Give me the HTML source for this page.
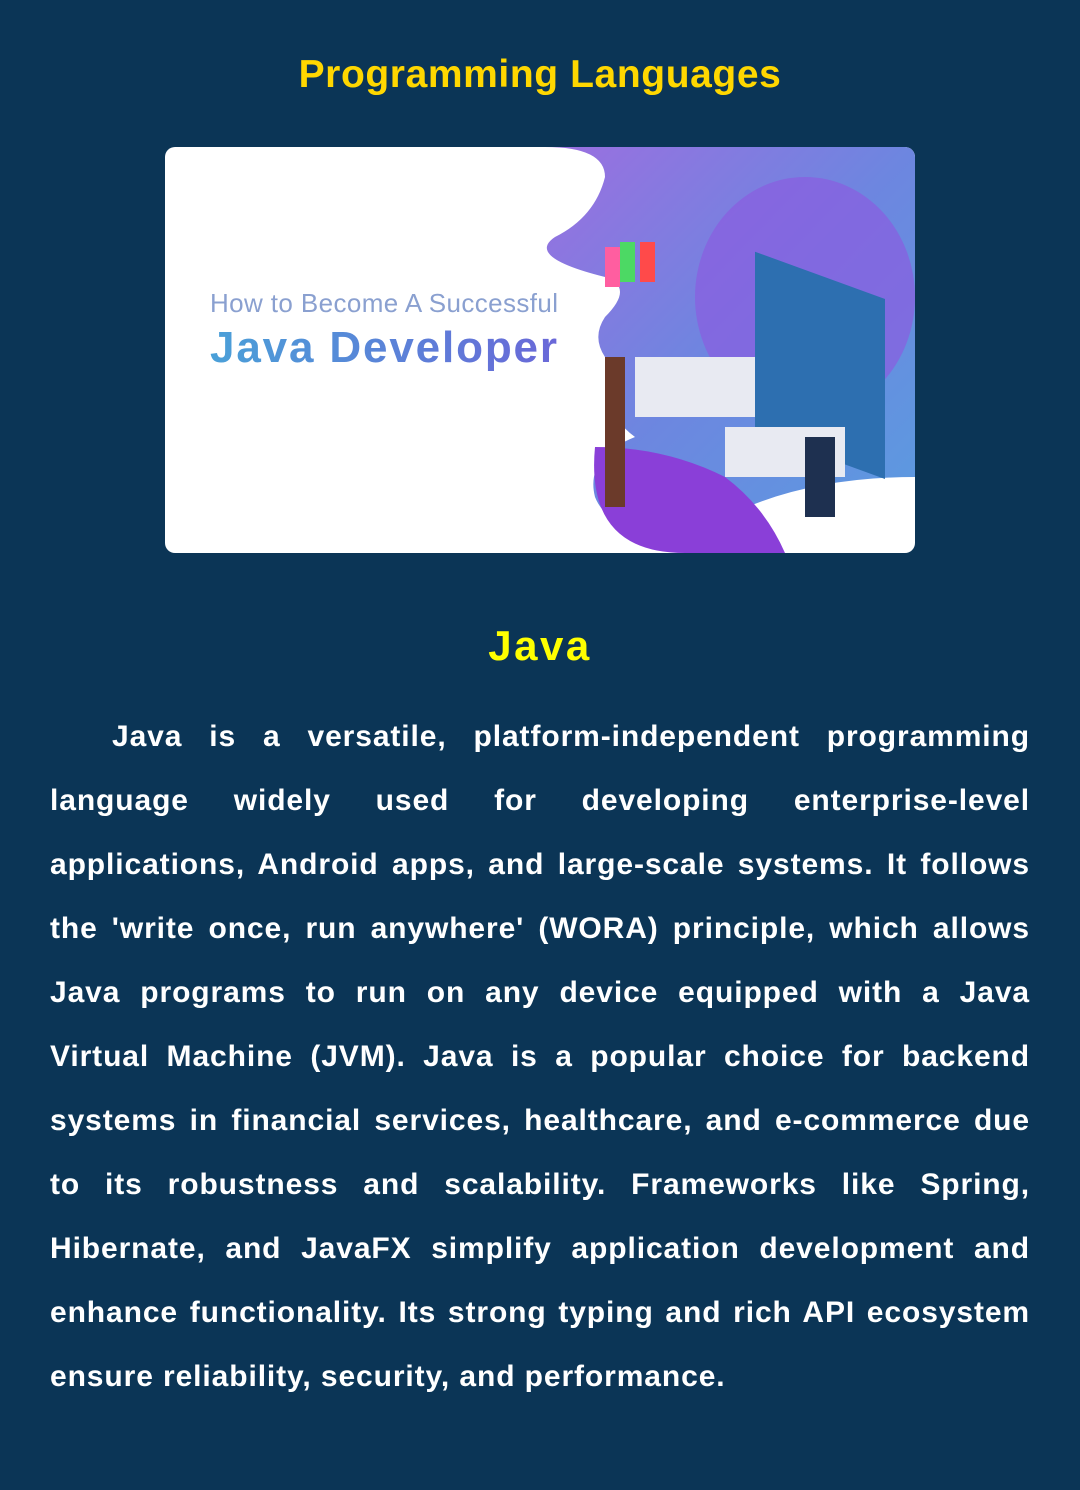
<!DOCTYPE html>
<html><head><meta charset="utf-8"><style>
html,body{margin:0;padding:0;}
body{width:1080px;height:1490px;background:#0b3556;font-family:"Liberation Sans",Arial,sans-serif;overflow:hidden;position:relative;}
h1{position:absolute;top:50px;left:0;width:1080px;margin:0;text-align:center;color:#ffd700;font-size:39px;font-weight:bold;line-height:50px;letter-spacing:0.6px;}
.img{position:absolute;left:165px;top:147px;width:750px;height:406px;background:#fff;border-radius:10px;overflow:hidden;}
h2{position:absolute;top:620px;left:0;width:1080px;margin:0;text-align:center;color:#ffff00;font-size:42px;font-weight:bold;line-height:52px;letter-spacing:2.5px;}
p{position:absolute;top:705px;left:50px;width:980px;margin:0;color:#fff;font-size:30px;font-weight:bold;line-height:64px;text-align:justify;text-indent:62px;letter-spacing:0.9px;}
</style></head><body>
<h1>Programming Languages</h1>
<div class="img">
<svg width="750" height="406" viewBox="0 0 750 406">
<defs>
<linearGradient id="g1" x1="0" y1="0" x2="1" y2="1"><stop offset="0" stop-color="#9b6fe0"/><stop offset="0.5" stop-color="#6d86e0"/><stop offset="1" stop-color="#5b9be0"/></linearGradient>
<linearGradient id="t1" x1="0" y1="0" x2="1" y2="0"><stop offset="0" stop-color="#4aa0d8"/><stop offset="1" stop-color="#6a68d8"/></linearGradient>
</defs>
<path d="M380 0 Q440 0 440 30 Q430 70 390 90 Q360 110 440 130 Q470 140 440 170 Q420 200 460 230 Q430 260 470 290 Q420 310 430 350 Q450 400 560 370 Q640 330 750 330 L750 0 Z" fill="url(#g1)"/>
<ellipse cx="640" cy="150" rx="110" ry="120" fill="#8a5ce0" opacity="0.7"/>
<path d="M430 300 Q420 406 520 406 L620 406 Q600 360 560 330 Q500 300 430 300 Z" fill="#8a3fd8"/>
<rect x="590" y="90" width="130" height="180" fill="#2d6fb0" transform="skewY(20) translate(0,-200)"/>
<rect x="470" y="210" width="120" height="60" fill="#e8eaf2"/>
<rect x="560" y="280" width="120" height="50" fill="#e8eaf2"/>
<rect x="440" y="210" width="20" height="150" fill="#6b3a2a"/>
<rect x="640" y="290" width="30" height="80" fill="#1e3050"/>
<rect x="440" y="100" width="15" height="40" fill="#ff5ea0"/>
<rect x="455" y="95" width="15" height="40" fill="#4cd964"/>
<rect x="475" y="95" width="15" height="40" fill="#ff4a4a"/>
<text x="45" y="165" font-family="Liberation Sans,sans-serif" font-size="26" fill="#8aa0d0" textLength="348">How to Become A Successful</text>
<text x="45" y="215" font-family="Liberation Sans,sans-serif" font-size="44" font-weight="bold" fill="url(#t1)" textLength="347">Java Developer</text>
</svg>
</div>
<h2>Java</h2>
<p>Java is a versatile, platform-independent programming language widely used for developing enterprise-level applications, Android apps, and large-scale systems. It follows the 'write once, run anywhere' (WORA) principle, which allows Java programs to run on any device equipped with a Java Virtual Machine (JVM). Java is a popular choice for backend systems in financial services, healthcare, and e-commerce due to its robustness and scalability. Frameworks like Spring, Hibernate, and JavaFX simplify application development and enhance functionality. Its strong typing and rich API ecosystem ensure reliability, security, and performance.</p>
</body></html>
